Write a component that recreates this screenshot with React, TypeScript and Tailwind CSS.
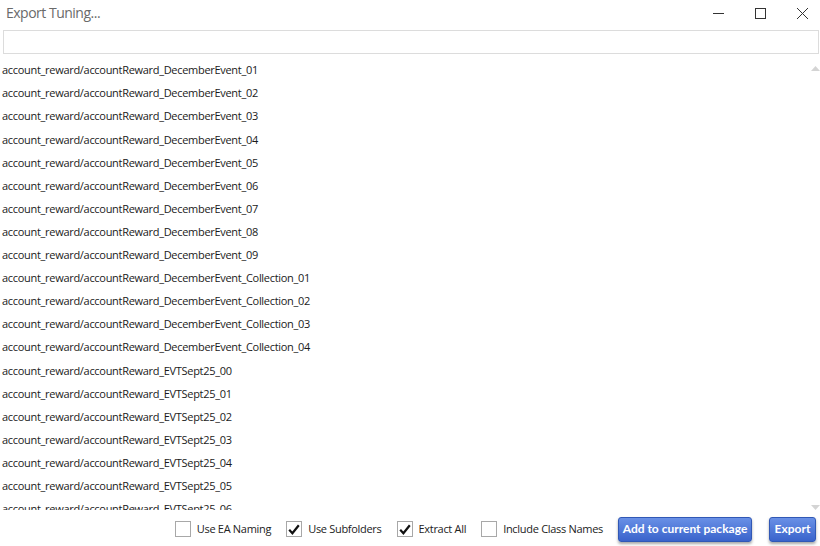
import React from 'react';

const ITEMS = [
  'account_reward/accountReward_DecemberEvent_01',
  'account_reward/accountReward_DecemberEvent_02',
  'account_reward/accountReward_DecemberEvent_03',
  'account_reward/accountReward_DecemberEvent_04',
  'account_reward/accountReward_DecemberEvent_05',
  'account_reward/accountReward_DecemberEvent_06',
  'account_reward/accountReward_DecemberEvent_07',
  'account_reward/accountReward_DecemberEvent_08',
  'account_reward/accountReward_DecemberEvent_09',
  'account_reward/accountReward_DecemberEvent_Collection_01',
  'account_reward/accountReward_DecemberEvent_Collection_02',
  'account_reward/accountReward_DecemberEvent_Collection_03',
  'account_reward/accountReward_DecemberEvent_Collection_04',
  'account_reward/accountReward_EVTSept25_00',
  'account_reward/accountReward_EVTSept25_01',
  'account_reward/accountReward_EVTSept25_02',
  'account_reward/accountReward_EVTSept25_03',
  'account_reward/accountReward_EVTSept25_04',
  'account_reward/accountReward_EVTSept25_05',
  'account_reward/accountReward_EVTSept25_06',
];

const Check = ({ checked, label }: { checked: boolean; label: string }) => (
  <label className="flex items-center gap-[6px]">
    <span className="w-[16px] h-[16px] border border-[#a8a8a8] bg-white flex items-center justify-center shrink-0">
      {checked && (
        <svg width="12" height="11" viewBox="0 0 12 11">
          <path d="M1.2 5.8 L4.4 9.2 L10.8 1.2" fill="none" stroke="#111" strokeWidth="2.2" />
        </svg>
      )}
    </span>
    <span className="text-[11px] tracking-[-0.3px] text-[#222] whitespace-nowrap">{label}</span>
  </label>
);

export default function App() {
  return (
    <div
      className="w-[820px] h-[546px] bg-white flex flex-col overflow-hidden"
      style={{ fontFamily: '"Open Sans", "Noto Sans", sans-serif' }}
    >
      {/* title bar */}
      <div className="h-[26px] flex items-center shrink-0">
        <span className="pl-[6px] text-[14px] tracking-[-0.5px] text-[#6a6a6a] flex-1 leading-none">Export Tuning...</span>
        <div className="flex items-center gap-[31px] pr-[12px]">
          <svg width="11" height="11" viewBox="0 0 11 11"><path d="M0 5.5 H11" stroke="#333" strokeWidth="1" /></svg>
          <svg width="11" height="11" viewBox="0 0 11 11"><rect x="0.5" y="0.5" width="10" height="10" fill="none" stroke="#333" strokeWidth="1" /></svg>
          <svg width="11" height="11" viewBox="0 0 11 11"><path d="M0 0 L11 11 M11 0 L0 11" stroke="#333" strokeWidth="1" /></svg>
        </div>
      </div>

      {/* search box */}
      <div className="pl-[3px] pr-[1px] pt-[4px] shrink-0">
        <div className="h-[24px] border border-[#dcdcdc] bg-white" />
      </div>

      {/* list */}
      <div className="h-[451px] flex mt-[5px] shrink-0">
        <div className="flex-1 overflow-hidden">
          {ITEMS.map((it) => (
            <div key={it} className="h-[23.1px] flex items-center pl-[2px] text-[11px] tracking-[-0.3px] text-[#1a1a1a] whitespace-nowrap">
              {it}
            </div>
          ))}
        </div>
        <div className="w-[10px] flex flex-col justify-between items-center pt-[7px] pb-[0px]">
          <svg width="9" height="5" viewBox="0 0 9 5"><path d="M0 5 L4.5 0 L9 5 Z" fill="#d4d4d4" /></svg>
          <svg width="9" height="5" viewBox="0 0 9 5"><path d="M0 0 L4.5 5 L9 0 Z" fill="#d4d4d4" /></svg>
        </div>
      </div>

      {/* footer */}
      <div className="flex-1 flex items-center justify-end pr-[4px] pt-[2px] gap-[15px]" style={{ fontFamily: 'Lato, "Open Sans", sans-serif' }}>
        <div className="flex items-center gap-[15px]" style={{ fontFamily: '"Open Sans", sans-serif' }}>
          <Check checked={false} label="Use EA Naming" />
          <Check checked label="Use Subfolders" />
          <Check checked label="Extract All" />
          <Check checked={false} label="Include Class Names" />
        </div>
        <button className="h-[25px] w-[134px] rounded-[3px] text-white font-bold text-[12px] bg-gradient-to-b from-[#6990e6] to-[#3a63cb] border border-[#3158b5] shadow-[0_2px_3px_rgba(0,0,0,0.35)] whitespace-nowrap">
          Add to current package
        </button>
        <button className="h-[25px] w-[47px] ml-[2px] rounded-[3px] text-white font-bold text-[12px] bg-gradient-to-b from-[#6990e6] to-[#3a63cb] border border-[#3158b5] shadow-[0_2px_3px_rgba(0,0,0,0.35)]">
          Export
        </button>
      </div>
    </div>
  );
}
